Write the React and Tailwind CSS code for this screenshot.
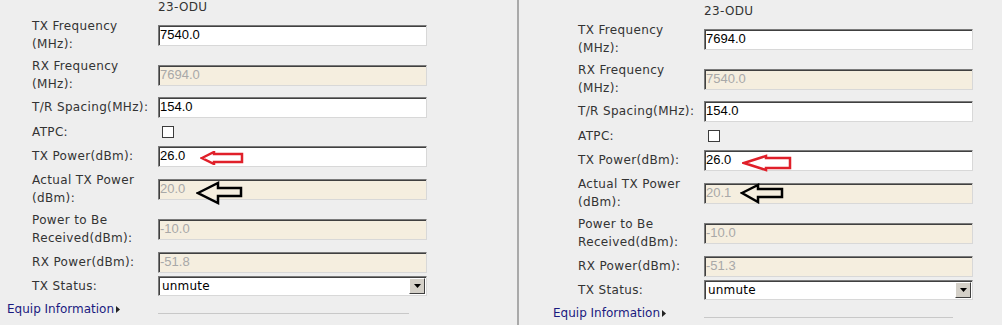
import React from "react";

const LABEL = "font-['DejaVu_Sans',sans-serif] text-[12px] leading-[18px] tracking-[0.35px] text-[#333333]";

function Field({ value, disabled, children }) {
  return (
    <div
      className={`relative h-[21px] w-[269px] flex items-center px-px border border-t-[#7a7a7a] border-l-[#7a7a7a] border-r-[#d8d8d8] border-b-[#d8d8d8] shadow-[inset_1px_1px_0_#404040] font-['Liberation_Sans',sans-serif] text-[13px] ${
        disabled ? "bg-[#f5eedf] text-[#a8a8a8]" : "bg-white text-black"
      }`}
    >
      {value}
      {children}
    </div>
  );
}

function Arrow({ color, className, w, h, points }) {
  return (
    <svg className={`absolute ${className}`} width={w} height={h} viewBox={`0 0 ${w} ${h}`}>
      <polygon points={points} fill="none" stroke={color} strokeWidth="2.5" strokeLinejoin="miter" />
    </svg>
  );
}

function Row({ h, label, children }) {
  return (
    <div className={`flex items-center pl-[25px] ${h}`}>
      <div className={`w-[126px] shrink-0 ${LABEL}`}>{label}</div>
      {children}
    </div>
  );
}

function Panel({ data, pad, redArrow, blackArrow, lineW }) {
  return (
    <div className={`flex flex-col ${pad}`}>
      <div className="flex h-[14px] items-center pl-[151px]">
        <span className={LABEL}>23-ODU</span>
      </div>
      <Row h="h-[42px]" label={<>TX Frequency<br />(MHz):</>}>
        <Field value={data.tx} />
      </Row>
      <Row h="h-[38px]" label={<>RX Frequency<br />(MHz):</>}>
        <Field value={data.rx} disabled />
      </Row>
      <Row h="h-[26px]" label="T/R Spacing(MHz):">
        <Field value="154.0" />
      </Row>
      <Row h="h-[24px]" label="ATPC:">
        <div className="ml-[4px] h-[12px] w-[12px] border border-[#3c3c3c] bg-white" />
      </Row>
      <Row h="h-[24px]" label="TX Power(dBm):">
        <Field value="26.0">{redArrow}</Field>
      </Row>
      <Row h="h-[42px]" label={<>Actual TX Power<br />(dBm):</>}>
        <Field value={data.actual} disabled>{blackArrow}</Field>
      </Row>
      <Row h="h-[38px]" label={<>Power to Be<br />Received(dBm):</>}>
        <Field value="-10.0" disabled />
      </Row>
      <Row h="h-[28px]" label="RX Power(dBm):">
        <Field value={data.rxp} disabled />
      </Row>
      <Row h="h-[20px]" label="TX Status:">
        <div className="flex h-[20px] w-[269px] items-center justify-between border border-t-[#7a7a7a] border-l-[#7a7a7a] border-r-[#d8d8d8] border-b-[#d8d8d8] shadow-[inset_1px_1px_0_#404040] bg-white pl-[3px] pr-px">
          <span className="font-['DejaVu_Sans',sans-serif] text-[12px] tracking-[0.2px] text-black">unmute</span>
          <div className="flex h-[16px] w-[16px] items-center justify-center border border-t-white border-l-white border-r-[#404040] border-b-[#404040] bg-[#d4d0c8]">
            <svg width="7" height="4" viewBox="0 0 7 4">
              <polygon points="0,0 7,0 3.5,4" fill="#000" />
            </svg>
          </div>
        </div>
      </Row>
      <div className="flex h-[26px] items-center">
        <div className="flex w-[151px] shrink-0 items-center gap-[2px]">
          <span className="font-['DejaVu_Sans',sans-serif] text-[12px] text-[#1a1a80]">Equip Information</span>
          <svg width="4" height="7" viewBox="0 0 4 7">
            <polygon points="0,0 4,3.5 0,7" fill="#222" />
          </svg>
        </div>
        <div className={`mt-[8px] h-px bg-[#c8c8c8] ${lineW}`} />
      </div>
    </div>
  );
}

export default function App() {
  return (
    <div className="flex h-[325px] w-[1002px] overflow-hidden bg-[#eeeeee]">
      <div className="w-[517px] shrink-0">
        <Panel
          pad="pl-[7px]"
          lineW="w-[251px]"
          data={{ tx: "7540.0", rx: "7694.0", actual: "20.0", rxp: "-51.8" }}
          redArrow={
            <Arrow
              color="#e0202a"
              className="left-[41px] top-[4px]"
              w={44}
              h={14}
              points="2,7 14,1 14,3 42,3 42,11 14,11 14,13"
            />
          }
          blackArrow={
            <Arrow
              color="#000"
              className="left-[37px] top-[1px]"
              w={47}
              h={24}
              points="2,12 22,2 22,7 45,7 45,15 22,15 22,22"
            />
          }
        />
      </div>
      <div className="w-[2px] shrink-0 bg-[#a9a9a9]" />
      <div className="flex-1 pt-[4px]">
        <Panel
          pad="pl-[34px]"
          lineW="w-[249px]"
          data={{ tx: "7694.0", rx: "7540.0", actual: "20.1", rxp: "-51.3" }}
          redArrow={
            <Arrow
              color="#e0202a"
              className="left-[37px] top-[3px]"
              w={50}
              h={18}
              points="2,9 24,2 24,4 48,4 48,14 24,14 24,16"
            />
          }
          blackArrow={
            <Arrow
              color="#000"
              className="left-[35px] top-[-1px]"
              w={44}
              h={21}
              points="2,10 18,2 18,6 42,6 42,14 18,14 18,19"
            />
          }
        />
      </div>
    </div>
  );
}
